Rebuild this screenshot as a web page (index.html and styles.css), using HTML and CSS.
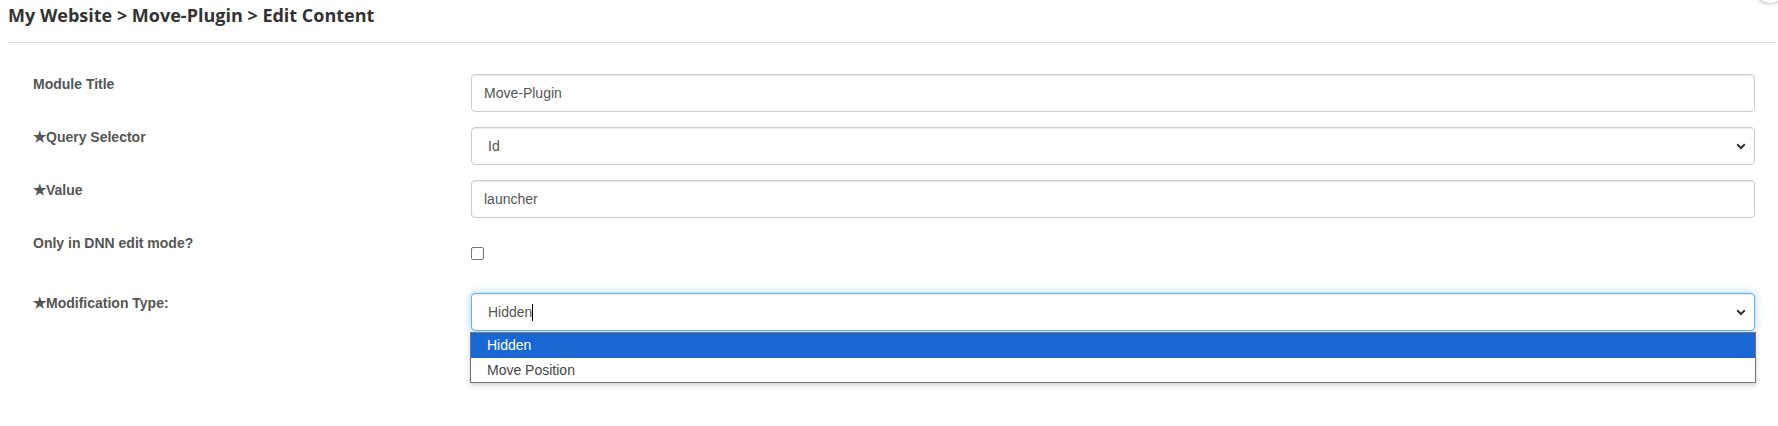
FILE: index.html
```html
<!DOCTYPE html>
<html lang="en">
<head>
<meta charset="utf-8">
<title>Edit Content</title>
<link rel="stylesheet" href="styles.css">
</head>
<body>
<div class="corner-bubble"></div>
<header class="page-header">
  <h1 class="crumbs">My Website &gt; Move-Plugin &gt; Edit Content</h1>
</header>
<main class="form">
  <div class="row">
    <label class="label">Module Title</label>
    <div class="control"><input class="input" type="text" value="Move-Plugin"></div>
  </div>
  <div class="row">
    <label class="label"><span class="star">★</span>Query Selector</label>
    <div class="control">
      <div class="select">
        <span class="select-text">Id</span>
        <svg class="chev" width="10" height="7" viewBox="0 0 10 7"><path d="M1.2 1.3 L5 5 L8.8 1.3" fill="none" stroke="#333" stroke-width="2"/></svg>
      </div>
    </div>
  </div>
  <div class="row">
    <label class="label"><span class="star">★</span>Value</label>
    <div class="control"><input class="input" type="text" value="launcher"></div>
  </div>
  <div class="row row-check">
    <label class="label">Only in DNN edit mode?</label>
    <div class="control"><span class="checkbox"></span></div>
  </div>
  <div class="row">
    <label class="label"><span class="star">★</span>Modification Type:</label>
    <div class="control">
      <div class="select focused">
        <span class="select-text">Hidden<span class="caret"></span></span>
        <svg class="chev" width="10" height="7" viewBox="0 0 10 7"><path d="M1.2 1.3 L5 5 L8.8 1.3" fill="none" stroke="#333" stroke-width="2"/></svg>
      </div>
      <ul class="listbox">
        <li class="option selected">Hidden</li>
        <li class="option">Move Position</li>
      </ul>
    </div>
  </div>
</main>
</body>
</html>
```

FILE: styles.css
```css
* { box-sizing: border-box; }
html, body { margin: 0; padding: 0; background: #fff; }
body {
  font-family: "Liberation Sans", Arial, sans-serif;
  font-size: 14px;
  color: #555;
  position: relative;
  overflow: hidden;
  height: 426px;
}
.corner-bubble {
  position: absolute;
  top: -22px;
  right: -6px;
  width: 28px;
  height: 26px;
  border-radius: 50%;
  border: 1px solid #d8d8d8;
  box-shadow: 0 1px 3px rgba(0,0,0,0.15);
  background: #fff;
}
.page-header {
  margin: 0 2px 0 8px;
  padding: 3px 0 15px;
  border-bottom: 1px solid #ddd;
}
.crumbs {
  margin: 0;
  font-family: "Open Sans", "Liberation Sans", sans-serif;
  font-weight: 700;
  font-size: 18px;
  line-height: 24px;
  color: #333;
}
.form {
  padding: 31px 23px 0 33px;
  display: flex;
  flex-direction: column;
  gap: 15px;
}
.row {
  display: grid;
  grid-template-columns: 438px 1fr;
  align-items: start;
}
.row-check { height: 45px; }
.label {
  padding-top: 1px;
  font-weight: 700;
  font-size: 14px;
  line-height: 18px;
  color: #555;
}
.star { font-size: 15px; }
.control { position: relative; }
.input, .select {
  display: flex;
  align-items: center;
  width: 100%;
  height: 38px;
  border: 1px solid #ccc;
  border-radius: 4px;
  background: #fff;
  box-shadow: inset 0 1px 1px rgba(0,0,0,0.075);
  font-family: "Liberation Sans", Arial, sans-serif;
  font-size: 14px;
  color: #555;
}
.input { padding: 0 12px; outline: none; }
.select { padding: 0 8px 0 16px; justify-content: space-between; }
.select.focused {
  border-color: #66afe9;
  box-shadow: inset 0 1px 1px rgba(0,0,0,0.075), 0 0 8px rgba(102,175,233,0.6);
}
.select-text { display: flex; align-items: center; }
.caret {
  display: inline-block;
  width: 1px;
  height: 17px;
  background: #000;
}
.chev { display: block; }
.checkbox {
  display: block;
  width: 13px;
  height: 13px;
  margin-top: 14px;
  border: 1px solid #767676;
  border-radius: 2px;
  background: #fff;
}
.listbox {
  position: absolute;
  left: -1px;
  right: -1px;
  top: 39px;
  margin: 0;
  padding: 0;
  list-style: none;
  border: 1px solid #767676;
  background: #fff;
  box-shadow: 0 2px 5px rgba(0,0,0,0.2);
}
.option {
  height: 24.5px;
  line-height: 24px;
  padding-left: 16px;
  font-size: 14px;
  color: #444;
}
.option.selected { background: #1967d2; color: #fff; }
```
